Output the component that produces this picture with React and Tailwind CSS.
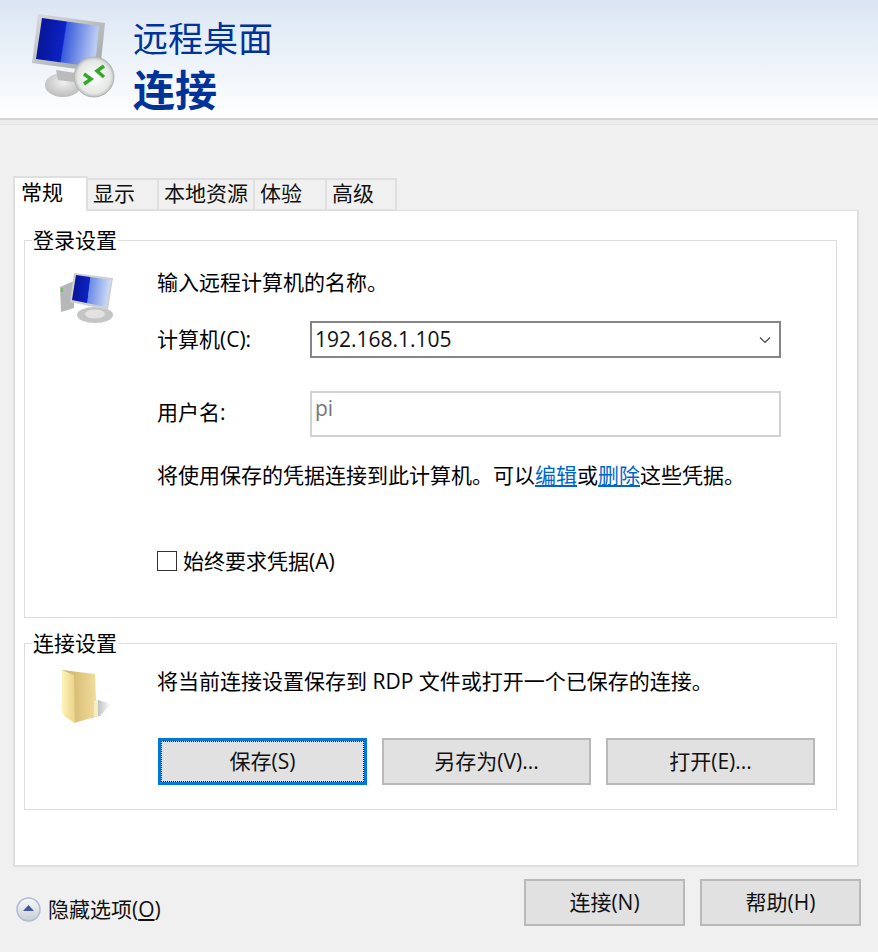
import React from "react";

const cjk = "font-['Open_Sans','Noto_Sans_CJK_SC',sans-serif]";

const MonitorBadgeIcon = () => (
  <svg width="92" height="92" viewBox="0 0 92 92" className="shrink-0">
    <defs>
      <linearGradient id="scr" x1="0" y1="0" x2="1" y2="0.12">
        <stop offset="0" stopColor="#07128c" />
        <stop offset="0.48" stopColor="#0c22c4" />
        <stop offset="0.5" stopColor="#3a5cdc" />
        <stop offset="1" stopColor="#bccdf4" />
      </linearGradient>
      <linearGradient id="frame" x1="0" y1="0" x2="1" y2="1">
        <stop offset="0" stopColor="#d8dadb" />
        <stop offset="1" stopColor="#a2a5a6" />
      </linearGradient>
      <radialGradient id="stand" cx="0.5" cy="0.4" r="0.6">
        <stop offset="0" stopColor="#f0f0f0" />
        <stop offset="1" stopColor="#bcbcbc" />
      </radialGradient>
      <radialGradient id="badge" cx="0.5" cy="0.5" r="0.55">
        <stop offset="0" stopColor="#ffffff" />
        <stop offset="0.75" stopColor="#e4e7e4" />
        <stop offset="1" stopColor="#a4a8a4" />
      </radialGradient>
    </defs>
    <ellipse cx="35" cy="73" rx="18" ry="12" fill="url(#stand)" />
    <polygon points="28,58 48,61 47,70 30,68" fill="#b9bbbc" />
    <polygon points="10,2 77,11 72,60 4,51" fill="url(#frame)" />
    <polygon points="14,6 71,14 67,55 8,47" fill="url(#scr)" />
    <circle cx="66" cy="65" r="20" fill="url(#badge)" stroke="#b4b7b4" strokeWidth="1" />
    <path d="M56 62 L63 67 L56 72 M76 54 L69 59 L76 65" fill="none" stroke="#35a82c" strokeWidth="3.500" />
  </svg>
);

const SmallPcIcon = () => (
  <svg width="56" height="56" viewBox="0 0 56 56">
    <defs>
      <linearGradient id="scr2" x1="0" y1="0" x2="1" y2="0.1">
        <stop offset="0" stopColor="#07128c" />
        <stop offset="0.46" stopColor="#0c22c4" />
        <stop offset="0.48" stopColor="#6a8ae6" />
        <stop offset="1" stopColor="#d0dcf6" />
      </linearGradient>
    </defs>
    <ellipse cx="37" cy="45" rx="18" ry="8" fill="#c4c5c5" />
    <ellipse cx="37" cy="44" rx="10" ry="4.500" fill="#e2e2e2" />
    <polygon points="2,17 16,11 16,38 3,42" fill="#b5b7b8" />
    <rect x="3" y="18" width="2" height="4" fill="#6fbf5a" />
    <polygon points="16,3 55,8 50,40 12,32" fill="#cfd1d3" />
    <polygon points="18,5 53,10 48,37 14,30" fill="url(#scr2)" />
  </svg>
);

const FolderIcon = () => (
  <svg width="50" height="56" viewBox="0 0 50 56">
    <defs>
      <linearGradient id="fback" x1="0" y1="0" x2="1" y2="0">
        <stop offset="0" stopColor="#c9ad62" />
        <stop offset="1" stopColor="#f4df9f" />
      </linearGradient>
      <linearGradient id="ffront" x1="0" y1="0" x2="1" y2="0">
        <stop offset="0" stopColor="#fff3b8" />
        <stop offset="1" stopColor="#e9d388" />
      </linearGradient>
      <linearGradient id="fshadow" x1="0" y1="0" x2="1" y2="0">
        <stop offset="0" stopColor="#9a9a9a" />
        <stop offset="1" stopColor="#ffffff" />
      </linearGradient>
    </defs>
    <polygon points="28,48 36,30 49,34 38,46" fill="url(#fshadow)" />
    <polygon points="0,0 33,4 34,30 36,46 12,53" fill="url(#fback)" />
    <polygon points="0,0 12,5 13,53 3,47 0,42" fill="url(#ffront)" />
    <polygon points="32,31 36,30 36,46 32,47" fill="#f8eec4" />
  </svg>
);

const DialogButton = ({ label, focused, className = "" }) => (
  <button
    className={`h-[47px] flex items-center justify-center bg-[#e1e1e1] text-[21px] text-[#111] ${
      focused ? "border-[3px] border-[#0078d7] outline-1 -outline-offset-[4px] outline-dotted outline-black" : "border-2 border-[#b9b9b9]"
    } ${className}`}
  >
    {label}
  </button>
);

const Group = ({ title, className, children }) => (
  <div className={`relative ml-[9px] mr-[20px] border border-[#dcdcdc] ${className}`}>
    <span className="absolute left-[7px] -top-[15px] bg-white px-px text-[21px] leading-[28px]">{title}</span>
    {children}
  </div>
);

const tabs = [
  { label: "显示", width: "w-[71px]" },
  { label: "本地资源", width: "w-[96px]" },
  { label: "体验", width: "w-[72px]" },
  { label: "高级", width: "w-[70px]" },
];

export default function App() {
  return (
    <div className={`w-[878px] h-[952px] flex flex-col overflow-hidden bg-[#f0f0f0] text-black ${cjk}`}>
      <header className="h-[118px] shrink-0 flex bg-gradient-to-b from-[#dae6f3] to-white pl-[28px] pt-3">
        <MonitorBadgeIcon />
        <div className="ml-[13px] text-[#003399]">
          <div className="text-[35px] leading-[44px] mt-[5px]">远程桌面</div>
          <div className="text-[42px] leading-[50px] font-bold mt-[4px]">连接</div>
        </div>
      </header>
      <div className="h-[7px] shrink-0 border-t-2 border-[#d4d4d4] bg-[#ececec] border-b border-b-[#e4e4e4]" />

      <div className="mt-[51px] mx-[13px] flex items-end h-[35px] relative z-10">
        <div className="w-[75px] h-[35px] bg-white border-2 border-b-0 border-[#dfdfdf] pl-[6px] text-[21px] leading-[28px]">常规</div>
        {tabs.map((t) => (
          <div
            key={t.label}
            className={`${t.width} h-[33px] border-2 border-l-0 border-[#dfdfdf] pl-[5px] text-[21px] leading-[27px] text-[#111] bg-[#f0f0f0]`}
          >
            {t.label}
          </div>
        ))}
      </div>

      <div className="ml-[13px] w-[846px] -mt-[1px] h-[657px] shrink-0 bg-white border-2 border-t border-[#dfdfdf] pt-[29px]">
        <Group title="登录设置" className="h-[378px]">
          <div className="flex pl-[33px] pt-[27px]">
            <div className="w-[99px] shrink-0 pt-[2px]">
              <SmallPcIcon />
            </div>
            <div className="flex-1 text-[21px]">
              <div className="leading-[28px]">输入远程计算机的名称。</div>
              <div className="flex items-center mt-[25px]">
                <span className="w-[153px]">计算机(C):</span>
                <div className="w-[471px] h-[37px] border-2 border-[#858585] flex items-center justify-between pl-[3px] pr-[8px] text-[#111]">
                  192.168.1.105
                  <svg width="12" height="8" viewBox="0 0 12 8" fill="none" stroke="#444" strokeWidth="1.200">
                    <path d="M1 1.500 L6 6.500 L11 1.500" />
                  </svg>
                </div>
              </div>
              <div className="flex items-center mt-[33px]">
                <span className="w-[153px] -mt-[2px]">用户名:</span>
                <div className="w-[471px] h-[46px] border-2 border-[#d2d2d2] pl-[3px] text-[#767676] leading-[30px]">pi</div>
              </div>
              <div className="leading-[28px] mt-[24px]">
                将使用保存的凭据连接到此计算机。可以<a className="text-[#0066cc] underline">编辑</a>或<a className="text-[#0066cc] underline">删除</a>这些凭据。
              </div>
              <label className="flex items-center mt-[58px] leading-[28px]">
                <span className="w-5 h-5 border border-[#333] bg-white mr-[6px]" />
                始终要求凭据(A)
              </label>
            </div>
          </div>
        </Group>

        <Group title="连接设置" className="h-[167px] mt-[25px]">
          <div className="flex pl-[37px] pt-[26px]">
            <div className="w-[95px] shrink-0">
              <FolderIcon />
            </div>
            <div className="text-[21px] leading-[28px] -mt-[3px]">将当前连接设置保存到 RDP 文件或打开一个已保存的连接。</div>
          </div>
          <div className="absolute left-[133px] top-[94px] flex gap-[15px]">
            <DialogButton label="保存(S)" focused className="w-[209px]" />
            <DialogButton label="另存为(V)..." className="w-[209px]" />
            <DialogButton label="打开(E)..." className="w-[209px]" />
          </div>
        </Group>
      </div>

      <footer className="flex items-start mt-[12px] pl-[16px] pr-[17px]">
        <svg width="25" height="25" viewBox="0 0 25 25" className="mt-[18px]">
          <defs>
            <linearGradient id="up" x1="0" y1="0" x2="0" y2="1">
              <stop offset="0" stopColor="#fafafa" />
              <stop offset="1" stopColor="#c8cdd0" />
            </linearGradient>
          </defs>
          <circle cx="12.500" cy="12.500" r="11.500" fill="url(#up)" stroke="#aebcdc" strokeWidth="1.500" />
          <polygon points="12.500,8 18,14 7,14" fill="#3c5aa8" />
        </svg>
        <span className="ml-[7px] mt-[16px] text-[21px] leading-[28px] text-[#111]">
          隐藏选项(<span className="underline">O</span>)
        </span>
        <div className="ml-auto flex gap-[15px]">
          <DialogButton label="连接(N)" className="w-[161px]" />
          <DialogButton label="帮助(H)" className="w-[161px]" />
        </div>
      </footer>
    </div>
  );
}
